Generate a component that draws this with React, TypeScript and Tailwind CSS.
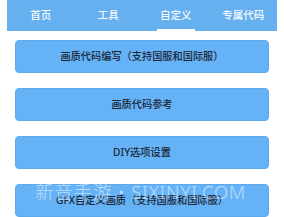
import React from "react";

const tabs = ["首页", "工具", "自定义", "专属代码"];
const buttons = [
  "画质代码编写（支持国服和国际服）",
  "画质代码参考",
  "DIY选项设置",
  "GFX自定义画质（支持国服和国际服）",
];

export default function App() {
  return (
    <div
      className="relative w-[284px] h-[217px] overflow-hidden bg-white"
      style={{ fontFamily: '"Noto Sans", "Noto Sans CJK SC", sans-serif' }}
    >
      <div className="mx-[7px] h-[31px] bg-[#66b0ef] flex">
        {tabs.map((t, i) => (
          <div key={t} className="flex-1 relative flex items-center justify-center">
            <span className="text-[10.5px] text-white/95 font-medium leading-none">{t}</span>
            {i === 2 && (
              <div className="absolute bottom-0 left-[15px] right-[15px] h-[2px] bg-white" />
            )}
          </div>
        ))}
      </div>
      <div className="mx-[15px] mt-[9px] flex flex-col gap-[15px]">
        {buttons.map((b) => (
          <div
            key={b}
            className="h-[33px] shrink-0 rounded-[4px] bg-[#65b2f6] border border-[#5ea9ea] flex items-center justify-center"
          >
            <span className="text-[10.2px] font-medium text-[#1c2836] leading-none">{b}</span>
          </div>
        ))}
      </div>
      <div
        className="absolute left-[35px] top-[183px] text-[18.5px] leading-none text-white/55 whitespace-nowrap tracking-[0.8px]"
        style={{ fontWeight: 300 }}
      >
        新音手游 • SIXINYI.COM
      </div>
    </div>
  );
}
